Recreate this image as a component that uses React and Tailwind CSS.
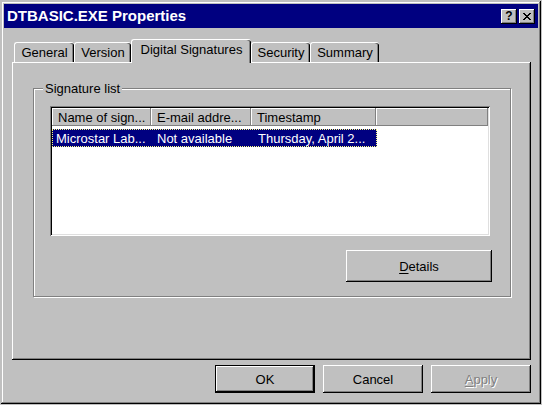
import React from 'react';

const font = { fontFamily: '"Liberation Sans", Arial, sans-serif' };

// classic 3D bevels
const raised = 'shadow-[inset_-1px_-1px_#000,inset_1px_1px_#fff,inset_-2px_-2px_#808080]';
const sunken = 'shadow-[inset_1px_1px_#808080,inset_-1px_-1px_#fff,inset_2px_2px_#000,inset_-2px_-2px_#dfdfdf]';

const CaptionButton = ({ children }) => (
  <div className={`flex h-[15px] w-[16px] items-center justify-center bg-[#c0c0c0] ${raised}`}>
    {children}
  </div>
);

const Tab = ({ label, width, active }) =>
  active ? (
    <div
      className={`relative z-10 -mb-px flex h-[24px] items-start justify-center rounded-t-[3px] border-l border-t border-white bg-[#c0c0c0] pt-[2px] shadow-[inset_-1px_0_#000,inset_-2px_0_#808080] ${width}`}
    >
      {label}
    </div>
  ) : (
    <div
      className={`flex h-[20px] items-start justify-center rounded-t-[3px] border-l border-t border-white bg-[#c0c0c0] pt-[2px] shadow-[inset_-1px_0_#000,inset_-2px_0_#808080] ${width}`}
    >
      {label}
    </div>
  );

const HeaderCell = ({ children, className }) => (
  <div
    className={`flex h-full items-center overflow-hidden whitespace-nowrap pl-[6px] shadow-[inset_-1px_-1px_#808080,inset_1px_1px_#fff] ${className}`}
  >
    {children}
  </div>
);

const Button = ({ children, className = '', isDefault, disabled }) => (
  <div className={`${isDefault ? 'border border-black' : ''} ${className}`}>
    <div
      className={`flex h-full w-full items-center justify-center bg-[#c0c0c0] ${raised} ${
        disabled ? 'text-[#808080] [text-shadow:1px_1px_#fff]' : 'text-black'
      }`}
    >
      {children}
    </div>
  </div>
);

export default function App() {
  return (
    <div className="h-[405px] w-[542px] bg-[#c0c0c0] p-px text-[13px] leading-[15px] text-black" style={font}>
      <div className="flex h-[403px] w-[540px] flex-col bg-[#c0c0c0] p-[3px] shadow-[inset_-1px_-1px_#000,inset_1px_1px_#c0c0c0,inset_-2px_-2px_#808080,inset_2px_2px_#fff]">
        {/* caption */}
        <div className="flex h-[24px] items-center bg-[#000080] pl-[3px] pr-[3px]">
          <span className="text-[15px] font-bold leading-[18px] text-white">DTBASIC.EXE Properties</span>
          <div className="ml-auto flex gap-[2px]">
            <CaptionButton>
              <span className="text-[12px] font-bold leading-[12px]">?</span>
            </CaptionButton>
            <CaptionButton>
              <svg width="8" height="7" viewBox="0 0 8 7" shapeRendering="crispEdges">
                <path d="M0 0h2v1h-2zM6 0h2v1h-2zM1 1h2v1h-2zM5 1h2v1h-2zM2 2h4v1h-4zM3 3h2v1h-2zM2 4h4v1h-4zM1 5h2v1h-2zM5 5h2v1h-2zM0 6h2v1h-2zM6 6h2v1h-2z" fill="#000" />
              </svg>
            </CaptionButton>
          </div>
        </div>

        <div className="flex flex-1 flex-col pl-[8px] pr-[7px]">
          {/* tabs */}
          <div className="mt-[11px] flex h-[23px] items-end pl-[2px]">
            <Tab label="General" width="w-[60px]" />
            <Tab label="Version" width="w-[57px]" />
            <Tab label="Digital Signatures" width="w-[120px]" active />
            <Tab label="Security" width="w-[59px]" />
            <Tab label="Summary" width="w-[69px]" />
          </div>

          {/* tab page */}
          <div className={`h-[298px] w-[519px] bg-[#c0c0c0] pl-[21px] pt-[26px] ${raised}`}>
            <div className="relative h-[209px] w-[478px] border border-[#808080] pl-[16px] pt-[17px] shadow-[inset_1px_1px_#fff,1px_1px_#fff]">
              <span className="absolute -top-[8px] left-[9px] bg-[#c0c0c0] px-[2px]">Signature list</span>

              {/* list view */}
              <div className={`h-[130px] w-[440px] bg-white p-[2px] ${sunken}`}>
                <div className="flex h-[18px] bg-[#c0c0c0]">
                  <HeaderCell className="w-[99px]">Name of sign...</HeaderCell>
                  <HeaderCell className="w-[100px]">E-mail addre...</HeaderCell>
                  <HeaderCell className="w-[125px]">Timestamp</HeaderCell>
                  <HeaderCell className="flex-1" />
                </div>
                <div className="mt-[3px] flex h-[18px] w-[325px] items-center whitespace-nowrap bg-[#000080] text-white outline outline-1 -outline-offset-1 outline-dotted outline-[#ffff80]">
                  <span className="w-[99px] pl-[4px]">Microstar Lab...</span>
                  <span className="w-[100px] pl-[6px]">Not available</span>
                  <span className="pl-[7px]">Thursday, April 2...</span>
                </div>
              </div>

              <Button className="ml-[296px] mt-[14px] h-[32px] w-[146px]">
                <span>
                  <span className="underline underline-offset-2">D</span>etails
                </span>
              </Button>
            </div>
          </div>

          {/* dialog buttons */}
          <div className="mt-[5px] flex justify-end gap-[8px]">
            <Button isDefault className="h-[28px] w-[100px]">OK</Button>
            <Button className="h-[28px] w-[100px]">Cancel</Button>
            <Button disabled className="h-[28px] w-[100px]">
              <span>
                <span className="underline underline-offset-2">A</span>pply
              </span>
            </Button>
          </div>
        </div>
      </div>
    </div>
  );
}
